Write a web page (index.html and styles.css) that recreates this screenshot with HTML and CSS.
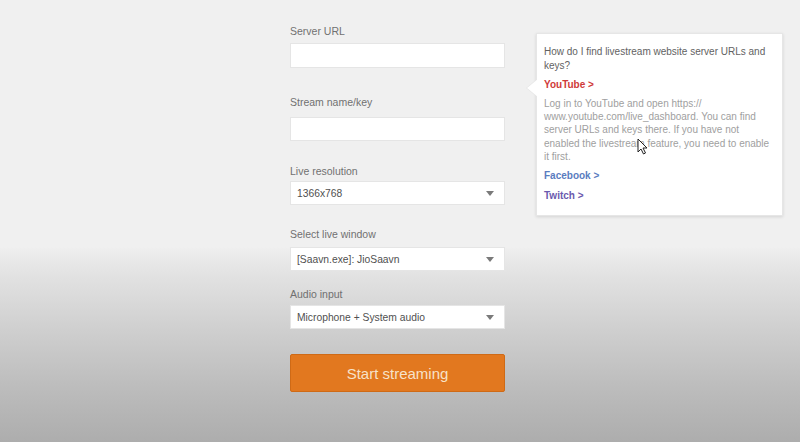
FILE: index.html
```html
<!DOCTYPE html>
<html>
<head>
<meta charset="utf-8">
<link rel="stylesheet" href="styles.css">
</head>
<body>
<div class="page">
  <form class="form">
    <div class="field f1">
      <label class="label">Server URL</label>
      <div class="input"></div>
    </div>
    <div class="field f2">
      <label class="label">Stream name/key</label>
      <div class="input"></div>
    </div>
    <div class="field f3">
      <label class="label">Live resolution</label>
      <div class="select"><span>1366x768</span><i class="caret"></i></div>
    </div>
    <div class="field f4">
      <label class="label">Select live window</label>
      <div class="select"><span>[Saavn.exe]: JioSaavn</span><i class="caret"></i></div>
    </div>
    <div class="field f5">
      <label class="label">Audio input</label>
      <div class="select"><span>Microphone + System audio</span><i class="caret"></i></div>
    </div>
    <div class="button">Start streaming</div>
  </form>

  <div class="tip">
    <p class="tip-title">How do I find livestream website server URLs and keys?</p>
    <p class="tip-link yt">YouTube &gt;</p>
    <p class="tip-text">Log in to YouTube and open https://<br>www.youtube.com/live_dashboard. You can find server URLs and keys there. If you have not enabled the livestream feature, you need to enable it first.</p>
    <p class="tip-link fb">Facebook &gt;</p>
    <p class="tip-link tw">Twitch &gt;</p>
  </div>

  <svg class="cursor" width="12" height="17" viewBox="0 0 12 17">
    <path d="M1 1 L1 14 L4 11 L6.5 16 L8.5 15 L6 10 L10 10 Z" fill="#fff" stroke="#222" stroke-width="1" stroke-linejoin="round"/>
  </svg>
</div>
</body>
</html>
```
FILE: styles.css
```css
html, body {
  margin: 0;
  padding: 0;
}
body {
  width: 800px;
  height: 442px;
  overflow: hidden;
  font-family: "Liberation Sans", Arial, sans-serif;
  background: linear-gradient(to bottom, #f0f0f0 0, #f0f0f0 247px, #ededed 251px, #e2e2e2 275px, #cfcfcf 330px, #bdbdbd 385px, #adadad 442px);
}
.page {
  position: relative;
  width: 800px;
  height: 442px;
}
.form {
  margin: 0;
  padding: 24px 0 0 290px;
  width: 215px;
  display: flex;
  flex-direction: column;
}
.field {
  display: flex;
  flex-direction: column;
}
.label {
  font-size: 10.5px;
  line-height: 14px;
  height: 14px;
  color: #707070;
}
.input, .select {
  box-sizing: border-box;
  height: 24px;
  background: #fff;
  border: 1px solid #e5e5e5;
}
.f1 .input { margin-top: 5px; height: 25px; }
.f2 { margin-top: 27px; }
.f2 .input { margin-top: 8px; }
.f3 { margin-top: 23px; }
.f3 .select { margin-top: 3px; }
.f4 { margin-top: 22px; }
.f4 .select { margin-top: 6px; }
.f5 { margin-top: 16px; }
.f5 .select { margin-top: 4px; }
.select {
  display: flex;
  align-items: center;
  justify-content: space-between;
  padding: 0 10px 0 6px;
  font-size: 10.3px;
  color: #505050;
}
.caret {
  width: 0;
  height: 0;
  border-left: 4px solid transparent;
  border-right: 4px solid transparent;
  border-top: 5px solid #7a7a7a;
}
.button {
  margin-top: 25px;
  box-sizing: border-box;
  height: 38px;
  background: #e2781f;
  border: 1px solid #cf6a16;
  border-radius: 2px;
  color: #f7e2c9;
  font-size: 15px;
  display: flex;
  align-items: center;
  justify-content: center;
}
.tip {
  position: absolute;
  left: 536px;
  top: 33px;
  width: 247px;
  height: 183px;
  box-sizing: border-box;
  padding: 11px 8px 0 7px;
  background: #fff;
  border: 1px solid #e6e6e6;
  box-shadow: 0 1px 3px rgba(0,0,0,0.12);
}
.tip::before {
  content: "";
  position: absolute;
  left: -11px;
  top: 45px;
  width: 0;
  height: 0;
  border-top: 9px solid transparent;
  border-bottom: 9px solid transparent;
  border-right: 11px solid #e6e6e6;
}
.tip::after {
  content: "";
  position: absolute;
  left: -10px;
  top: 45px;
  width: 0;
  height: 0;
  border-top: 9px solid transparent;
  border-bottom: 9px solid transparent;
  border-right: 11px solid #fff;
}
.tip p {
  margin: 0;
  font-size: 10px;
}
.tip-title {
  line-height: 14px;
  color: #626262;
}
.tip-link {
  font-weight: bold;
  line-height: 14px;
}
.yt {
  margin-top: 5px !important;
  color: #cf3a3a;
}
.tip-text {
  margin-top: 5px !important;
  line-height: 13.2px;
  color: #a0a0a0;
}
.fb {
  margin-top: 6px !important;
  color: #5a7cc0;
}
.tw {
  margin-top: 6px !important;
  color: #6a5aae;
}
.cursor {
  position: absolute;
  left: 637px;
  top: 138px;
}
```
